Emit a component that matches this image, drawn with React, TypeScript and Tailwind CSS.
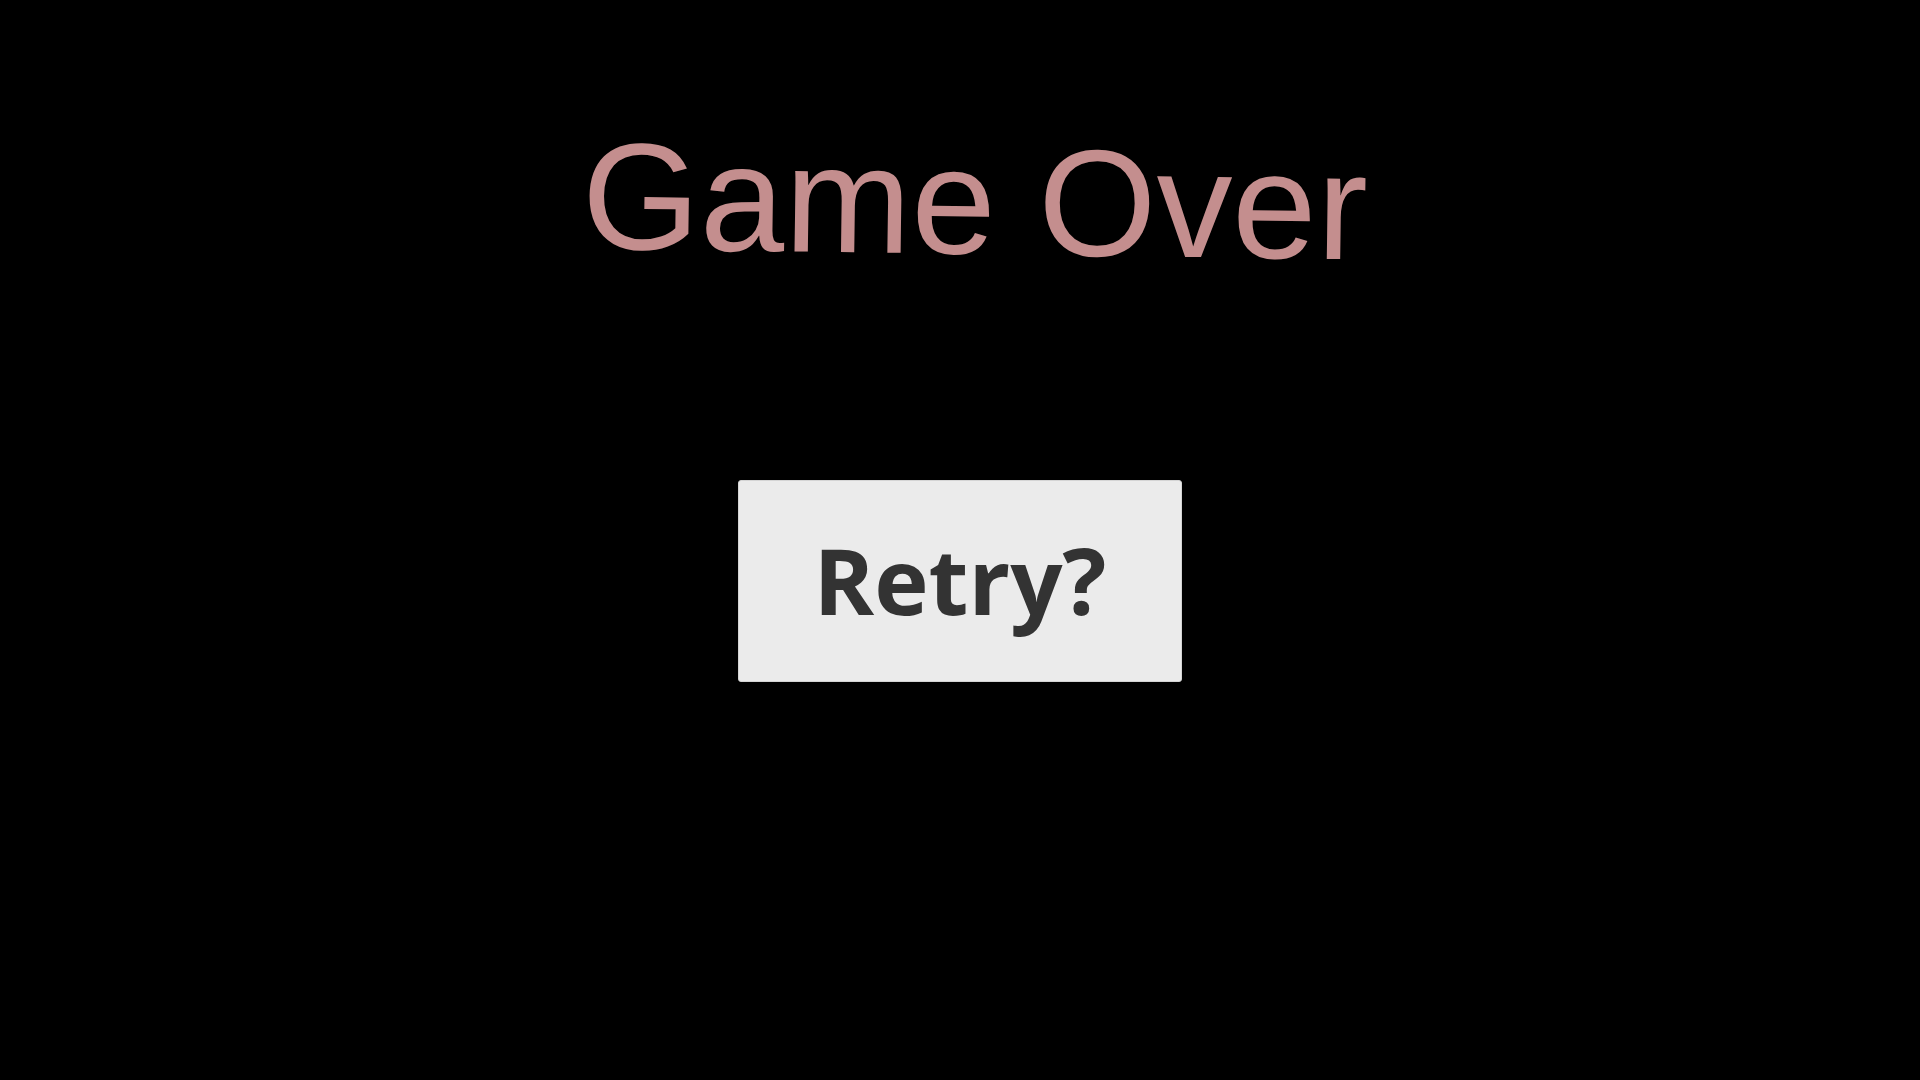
export default function App() {
  return (
    <div className="flex min-h-screen w-full flex-col items-center bg-black pt-[125px]">
      <h1 className="translate-x-[15px] rotate-[0.8deg] font-['Liberation_Sans',Arial,sans-serif] text-[152px] font-normal leading-none text-[#c48e8e]">
        Game Over
      </h1>
      <button
        type="button"
        className="mt-[203px] flex h-[202px] w-[444px] items-center justify-center rounded-[3px] border border-[#d4d4d4] bg-[#ebebeb] pb-[3px] font-['Open_Sans','Noto_Sans',sans-serif] text-[92px] font-bold leading-none text-[#333333]"
      >
        Retry?
      </button>
    </div>
  )
}
